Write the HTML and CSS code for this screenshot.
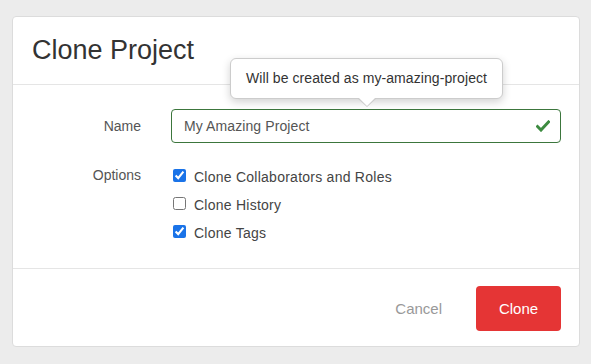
FILE: index.html
```html
<!DOCTYPE html>
<html lang="en">
<head>
    <meta charset="UTF-8">
    <meta name="viewport" content="width=device-width, initial-scale=1.0">
    <title>Clone Project</title>
    <link rel="stylesheet" href="styles.css">
</head>
<body>
    <div class="modal">
        <div class="modal-header">
            <h1 class="modal-title">Clone Project</h1>
        </div>

        <div class="modal-body">
            <label class="field-label" for="project-name">Name</label>
            <div class="input-wrap">
                <input class="text-input" id="project-name" type="text" value="My Amazing Project">
                <svg class="valid-icon" width="14" height="12" viewBox="0 0 14 12">
                    <path d="M1.5 6.5 L5 10 L12.5 2" fill="none" stroke="#3d8b40" stroke-width="3" stroke-linecap="square"/>
                </svg>
                <!-- tooltip above the input -->
                <div class="tooltip">Will be created as my-amazing-project</div>
            </div>

            <span class="field-label options-label">Options</span>
            <div class="options">
                <label class="option"><input type="checkbox" checked> Clone Collaborators and Roles</label>
                <label class="option"><input type="checkbox"> Clone History</label>
                <label class="option"><input type="checkbox" checked> Clone Tags</label>
            </div>
        </div>

        <div class="modal-footer">
            <button class="btn btn-link" type="button">Cancel</button>
            <button class="btn btn-danger" type="button">Clone</button>
        </div>
    </div>
</body>
</html>
```

FILE: styles.css
```css
body {
    margin: 0;
    padding: 16px 11px 16px 12px;
    background: #ececec;
    font-family: 'Liberation Sans', Arial, Helvetica, sans-serif;
    color: #555;
}

.modal {
    background: #fff;
    border: 1px solid #dcdcdc;
    border-radius: 4px;
}

.modal-header {
    height: 67px;
    display: flex;
    align-items: center;
    padding-left: 19px;
    border-bottom: 1px solid #e5e5e5;
}

.modal-title {
    margin: 0;
    font-size: 27px;
    font-weight: normal;
    color: #333;
    line-height: 1;
}

/* 表單 */
.modal-body {
    display: grid;
    grid-template-columns: 128px 1fr;
    column-gap: 30px;
    row-gap: 18px;
    padding: 24px 18px 23px 0;
}

.field-label {
    text-align: right;
    font-size: 14px;
    color: #555;
    align-self: center;
}

.options-label {
    align-self: start;
    line-height: 28px;
}

.input-wrap {
    position: relative;
}

.text-input {
    display: block;
    box-sizing: border-box;
    width: 100%;
    height: 34px;
    padding: 0 12px;
    border: 1px solid #3c763d;
    border-radius: 4px;
    font-family: inherit;
    font-size: 14px;
    letter-spacing: 0.1px;
    color: #555;
    outline: none;
}

.valid-icon {
    position: absolute;
    right: 11px;
    top: 11px;
}

.tooltip {
    position: absolute;
    left: 59px;
    bottom: 44px;
    padding: 0 15px;
    height: 39px;
    line-height: 39px;
    background: #fff;
    border: 1px solid #ccc;
    border-radius: 6px;
    box-shadow: 0 3px 8px rgba(0, 0, 0, 0.18);
    font-size: 14px;
    letter-spacing: 0.08px;
    color: #333;
    white-space: nowrap;
}

.tooltip::before,
.tooltip::after {
    content: '';
    position: absolute;
    left: 50%;
    border-style: solid;
    border-color: transparent;
}

.tooltip::before {
    top: 100%;
    margin-left: -10px;
    border-width: 9px 10px 0;
    border-top-color: #ccc;
}

.tooltip::after {
    top: 100%;
    margin-left: -9px;
    margin-top: -1px;
    border-width: 9px 9px 0;
    border-top-color: #fff;
}

.options {
    display: flex;
    flex-direction: column;
}

.option {
    box-sizing: border-box;
    display: flex;
    align-items: center;
    height: 28px;
    padding-top: 4px;
    font-size: 14px;
    letter-spacing: 0.25px;
    color: #444;
}

.option input {
    margin: 0 8px 4px 2px;
    width: 13px;
    height: 13px;
    accent-color: #1a73e8;
}

.modal-footer {
    display: flex;
    justify-content: flex-end;
    align-items: center;
    gap: 14px;
    padding: 17px 18px 15px;
    border-top: 1px solid #e5e5e5;
}

.btn {
    font-family: inherit;
    font-size: 15px;
    border-radius: 4px;
    border: none;
    cursor: pointer;
    height: 45px;
    padding: 0 20px;
}

.btn-link {
    background: none;
    color: #999;
}

.btn-danger {
    background: #e53535;
    color: #fff;
    width: 85px;
}
```
